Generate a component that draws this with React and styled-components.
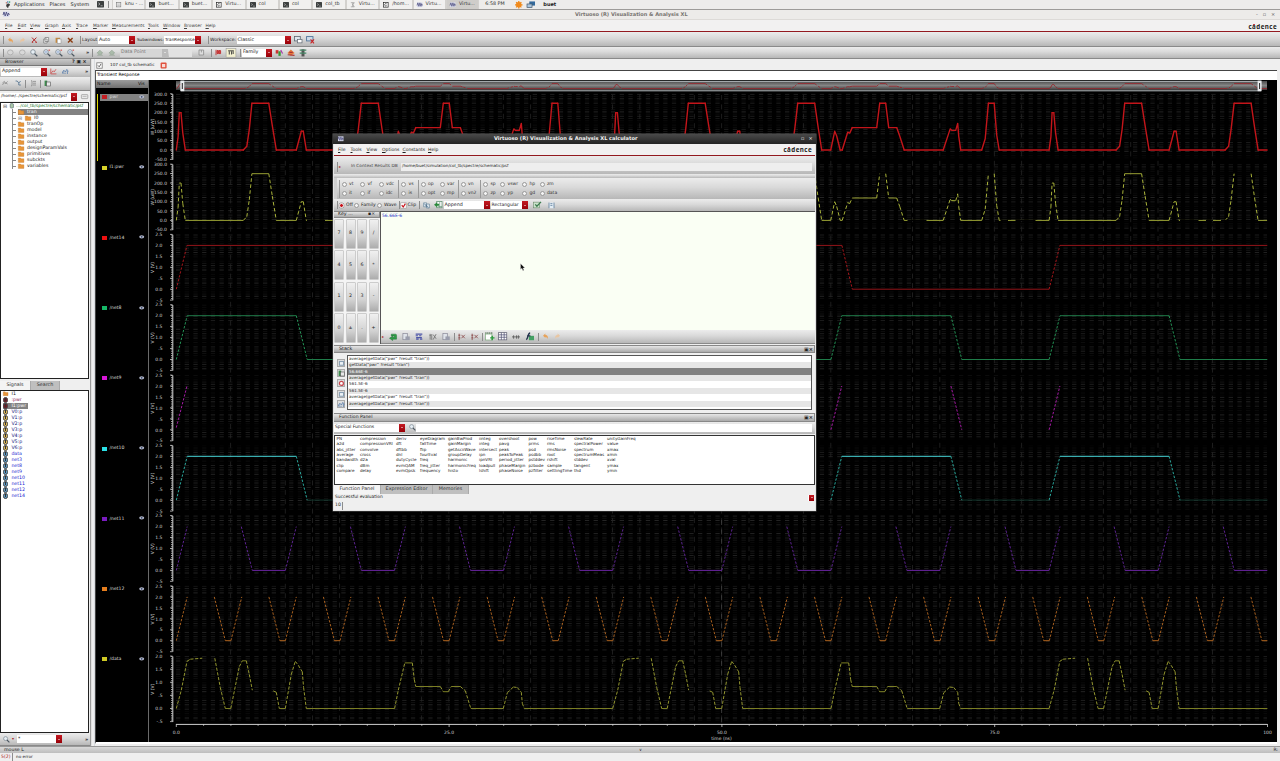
import React from "react";
import styled, { createGlobalStyle } from "styled-components";

const Global = createGlobalStyle`
  * { box-sizing: border-box; }
  html, body { margin: 0; padding: 0; background: #ededed; }
  body { width: 1280px; height: 761px; overflow: hidden; font-family: "DejaVu Sans", sans-serif; font-size: 5px; line-height: 1; color: #222; }
`;

const bar = "linear-gradient(#ececec, #d9d9d9 45%, #b7b7b7)";

const Screen = styled.div`
  width: 1280px; height: 761px; position: relative; overflow: hidden;
  display: flex; flex-direction: column; background: #efefef;
`;
const Row = styled.div`
  display: flex; align-items: center; flex: none; overflow: hidden;
  height: ${(p) => p.$h}px;
  padding: ${(p) => p.$pt || 0}px ${(p) => p.$pr || 0}px 0 ${(p) => p.$pl || 0}px;
`;
const GnomePanel = styled(Row)`background: #edeceb; border-bottom: 1px solid #9d9b99;`;
const TitleBar = styled(Row)`background: #edebe9; border-bottom: 1px solid #dddad7;`;
const MenuBar = styled(Row)`background: #f2f1f1; border-bottom: 1px solid #931a20;`;
const ToolBar = styled(Row)`background: ${bar}; border-bottom: ${(p) => (p.$line ? 1 : 0)}px solid #8a8a8a;`;
const Cell = styled.span`
  display: block; flex: none; white-space: nowrap; overflow: visible;
  width: ${(p) => (p.$w ? p.$w + "px" : "auto")};
  font-size: ${(p) => p.$s || 5}px; color: ${(p) => p.$c || "inherit"};
  font-weight: ${(p) => (p.$b ? 700 : 400)}; letter-spacing: ${(p) => p.$ls || 0}px;
  &::first-letter { text-decoration: ${(p) => (p.$u ? "underline" : "none")}; }
`;
const Gap = styled.span`flex: ${(p) => (p.$w ? "none" : 1)}; width: ${(p) => p.$w || 0}px;`;
const Sep = styled.span`flex: none; width: 1px; height: ${(p) => p.$h || 8}px; background: #8d8d8d; margin-right: ${(p) => p.$m || 0}px;`;
const TaskButton = styled.div`
  width: 33.4px; height: 9px; flex: none; display: flex; align-items: center; gap: 3px; padding-left: 3px;
  background: ${(p) => (p.$active ? "#cfcdca" : "#f1f0ef")}; border: 1px solid #d3d1ce; border-width: 0 1px; color: #333;
`;
const Field = styled.div`
  flex: none; width: ${(p) => p.$w}px; height: ${(p) => p.$h || 8}px; display: flex; align-items: center;
  background: ${(p) => p.$bg || "#fff"}; padding-left: 1px; overflow: hidden; white-space: nowrap; margin-right: ${(p) => p.$m || 0}px;
  font-size: ${(p) => p.$s || 4.8}px; color: ${(p) => p.$c || "inherit"};
`;
const Arrow = styled.i`
  margin-left: auto; flex: none; width: 6px; height: 100%; display: flex; align-items: center; justify-content: center;
  background: ${(p) => (p.$off ? "#bbb" : "linear-gradient(#c41a22, #980008)")};
  &::after { content: ""; border: 1px solid transparent; border-top: 1.5px solid #fff; border-bottom: 0; }
`;
const Combo = ({ w, h, m, s, off, children }) => (
  <Field $w={w} $h={h} $m={m} $s={s} $bg={off ? "#d6d6d6" : "#fff"} $c={off ? "#777" : undefined}>{children}<Arrow $off={off} /></Field>
);
const Logo = styled.span`
  font-family: "Open Sans", sans-serif; font-size: 6.2px; font-weight: 700; letter-spacing: 0.45px; color: #222; line-height: 7px; display: flex;
  i { font-style: normal; background: linear-gradient(#b3121d, #b3121d) 0.8px 0.9px / 2.4px 0.8px no-repeat; }
`;

const Svg = styled.svg`flex: none; display: block; margin-right: ${(p) => p.$m || 0}px; overflow: visible;`;
const shapes = {
  foot: <><path d="M1.5 5.8C.5 3.5 2 2.2 3.5 2.4 5.6 2.7 5 4.5 4 5c-1 .6-.2 1.8-1.2 1.9Z" fill="#3c3c3c" /><circle cx="1.3" cy="1.8" r=".6" fill="#a32" /><circle cx="2.8" cy="1" r=".7" fill="#26a" /><circle cx="4.6" cy="1.1" r=".8" fill="#3a7" /></>,
  term: <><rect width="7" height="6.4" rx=".6" fill="#3d4040" /><path d="M1.4 1.8l1.6 1.2-1.6 1.2M3.6 4.8h2" stroke="#ddd" strokeWidth=".6" fill="none" /></>,
  mail: <><rect x=".4" y=".7" width="5.2" height="5" fill="#eee" stroke="#777" strokeWidth=".7" /><path d="M1.5 2.4h3M1.5 4h3" stroke="#999" strokeWidth=".6" /></>,
  cds: <><rect x=".4" y=".4" width="5.6" height="5.6" fill="#fff" stroke="#222" strokeWidth=".8" /><path d="M4.3 2.2C3 1.2 2 2.2 2 3.3s1.2 1.8 2.3.9" stroke="#222" strokeWidth=".8" fill="none" /></>,
  wave: <><rect y=".4" width="6.4" height="5.6" fill="#d9dcec" /><path d="M0 4l1-3 1.2 4L3.4 1l1.2 4L5.4 2l1 2" stroke="#447" strokeWidth=".8" fill="none" /></>,
  sig: <path d="M1 .8h4L3.2 3.2 5 5.6H1M3.2 1v4.6" stroke="#888" strokeWidth=".7" fill="none" />,
  star: <><circle cx="3.3" cy="3.3" r="2.4" fill="#f08a1c" /><path d="M3.3 0v6.6M0 3.3h6.6M1 1l4.6 4.6M5.6 1L1 5.6" stroke="#f08a1c" strokeWidth="1.1" /></>,
  pcs: <><rect x="2" y=".4" width="5" height="3.6" fill="#346a9c" /><rect y="2.6" width="4.4" height="3.2" fill="#a9c6df" stroke="#456" strokeWidth=".6" /></>,
  undo: <path d="M1 2.8L3.4.6v1.3C5.7 2 6.4 3.7 5.5 6 5.1 4.5 4.6 4 3.4 3.9V5Z" fill="#e8a35a" />,
  redo: <path d="M6 2.8L3.6.6v1.3C1.4 2 .7 3.7 1.6 6c.4-1.5.8-2 2-2.1V5Z" fill="#e9c6a2" />,
  cut: <path d="M1 .6l4 4.2M5.4.6L1.2 5M.8 5.3h1.4M4.4 5.3h1.6" stroke="#b52a2a" strokeWidth="1" fill="none" />,
  copy: <path d="M2 .5h3.6v4H2ZM.7 2h3.4v4H.7Z" fill="#f5f5f5" stroke="#777" strokeWidth=".7" />,
  paste: <><rect x=".6" y=".8" width="4.4" height="5" fill="#c68a3c" /><rect x="2.2" y="2" width="3.8" height="4.2" fill="#fff" stroke="#888" strokeWidth=".5" /></>,
  del: <path d="M1 1l4.6 4.6M5.6 1L1 5.6" stroke="#8a3c12" strokeWidth="1.4" />,
  mag: <><circle cx="2.6" cy="2.6" r="2" fill="#e6eef4" stroke="#7a8791" strokeWidth=".7" /><path d="M4 4l2.4 2.4" stroke="#4b5660" strokeWidth="1.1" /></>,
  magRed: <><circle cx="2.6" cy="2.6" r="2" fill="#e6eef4" stroke="#7a8791" strokeWidth=".7" /><path d="M4 4l2.4 2.4" stroke="#4b5660" strokeWidth="1.1" /><path d="M4.8 1h1.4" stroke="#c33" strokeWidth=".8" /><path d="M1.6 2.6h2" stroke="#57b" strokeWidth=".6" /></>,
  globe: <ellipse cx="3.3" cy="3.4" rx="2.8" ry="2.5" fill="#d8d8d8" stroke="#a4a4a4" strokeWidth=".7" />,
  db: <path d="M1.4 1.4c0-1 3.8-1 3.8 0v3.8c0 1-3.8 1-3.8 0Z" fill="#a8c7a8" stroke="#456" strokeWidth=".6" />,
  arrowG: <path d="M3.4 1l2.6 2.6H4.8v1.2H2V3.6H.8ZM1 5.6h5" fill="#aabbaa" stroke="#93a393" strokeWidth=".5" />,
  win: <><rect x=".5" y=".5" width="5" height="3.8" fill="#dfe5ec" stroke="#5d6670" strokeWidth=".7" /><rect x="3" y="3" width="4" height="3" fill="#fff" stroke="#5d6670" strokeWidth=".6" /></>,
  winX: <><rect x=".5" y=".5" width="5.6" height="3.8" fill="#cfdbe9" stroke="#51759a" strokeWidth=".8" /><path d="M4 3l3 3.4M7 3L4 6.4" stroke="#c22" strokeWidth=".9" /></>,
  bars: <path d="M1 .8v5.4M1 1h4.6v5H1M3.4 1v2.4" stroke="#8d8d8d" strokeWidth=".8" fill="#ddd" />,
  flag: <path d="M1 .8v5.4M2 1.6h1.4v3H2zM4 1.6h1.6v3H4z" stroke="#b22" strokeWidth=".8" fill="#d55" />,
  tag: <><rect x="-.8" y="-.4" width="8.6" height="7.6" fill="#f3f0cf" stroke="#999" strokeWidth=".5" /><path d="M1 1.6h5M2 4.8V2M4 4.8V2M5.4 4.4V2" stroke="#333" strokeWidth=".8" /></>,
  chart: <path d="M.8.5v5.4h5.6M1.4 4.8l1.8-2 1 1L6 1.2" stroke="#c33" strokeWidth=".7" fill="none" />,
  multi: <path d="M.4 4.8l1.4-2.6L3.4 4l1.4-2.6 1.6 2M1 6V3.6M3 6V4.6M5.4 6V3" stroke="#547aa8" strokeWidth=".8" fill="none" />,
  gray: <path d="M.4 5l2-2.4 1 1.2L5.6 1.4M.4 3l2-1.6 1 1.4L5.6 4" stroke="#8a8a8a" strokeWidth=".8" fill="none" />,
  tree: <path d="M.6 1h1.6l1.6 2v2h2M5.6 1L3.8 3" stroke="#5b7893" strokeWidth=".9" fill="none" />,
  list: <path d="M1 .8h1v5H1M3 1.4h3M3 3.2h3M3 5h3" stroke="#888" strokeWidth=".8" fill="none" />,
  book2: <><rect x=".6" y=".6" width="2.6" height="5.4" fill="#3c8a4c" /><rect x="2.6" y="2" width="3.8" height="4" fill="#e8e8e8" stroke="#555" strokeWidth=".6" /></>,
  table: <><rect x=".4" y=".5" width="6.4" height="5.6" fill="#fff" stroke="#667" strokeWidth=".6" /><path d="M.4 2.2h6.4M.4 4.1h6.4M2.6.5v5.6M4.8.5v5.6" stroke="#557" strokeWidth=".6" /></>,
  gtable: <><rect x="2.4" y=".5" width="4.6" height="5.4" fill="#fff" stroke="#586" strokeWidth=".6" /><path d="M0 3.2L2.8 1v1.3h1.8v1.9H2.8v1.3Z" fill="#2b8a3c" /><path d="M5 .6v5.2M3.4 4.8H7" stroke="#586" strokeWidth=".5" /></>,
  gears: <><path d="M.6.8h3v4h-3zM3.4 2h3v4h-3z" fill="#dce7f0" stroke="#5c7c94" strokeWidth=".6" /><path d="M1.4 2l4 3.6" stroke="#357" strokeWidth=".7" /></>,
  green: <path d="M2 1h3.6q1 0 1 1v3.4H3.2V6.6L.4 4.6l2.8-2v1.2h1.4V2.6H2Z" fill="#2f9c48" stroke="#1c6f31" strokeWidth=".4" />,
  check: <><rect x=".6" y="1" width="5" height="5" fill="#cde3cd" stroke="#686" strokeWidth=".5" /><path d="M2 3l1.4 1.6L7 .8" stroke="#3a7b4c" strokeWidth="1.1" fill="none" /></>,
  book: <><rect x="1" y=".6" width="5" height="5.6" fill="#e2ecf4" /><path d="M1 .6v5.6M6 .6v5.6M2.4 1.6h2M2.4 3.4h2" stroke="#5d7f9c" strokeWidth=".8" /></>,
  doc: <><rect x=".8" y=".5" width="3.8" height="5.4" fill="#e0e4ea" stroke="#778" strokeWidth=".5" /><rect x="3" y="3" width="3.8" height="3.2" fill="#9a9dac" /></>,
  keys: <path d="M.6 1h5.8M.6 2.4h2M3.6 2.4h2M1 4h5M1 5.4h2.2M4.4 5.4h2" stroke="#4d56a8" strokeWidth="1" />,
  xy: <path d="M1 .8v5M.4 2h1.4M2.4 1v5M3.6 1.4l2.6 3.6M6.2 1L3.6 5.8" stroke="#777" strokeWidth=".8" />,
  xyr: <path d="M1 .6v5.6M.4 2h1.6M.4 4.2h1.6M3 1.6l3 3M6 1.6l-3 3" stroke="#844" strokeWidth=".7" />,
  plus: <><rect x=".4" y="1.6" width="5" height="4.6" fill="#fff" stroke="#7a7" strokeWidth=".5" /><path d="M.2.8h6" stroke="#353" strokeWidth=".9" strokeDasharray="1 .5" /><path d="M5.6 3v3.4M4 4.6h3.4" stroke="#2b9a3c" strokeWidth="1.1" /></>,
  step: <path d="M0 3.4h7M1.4 2v3M4 2v3M5.6 2v3" stroke="#555" strokeWidth=".7" />,
  fn: <><rect x="3" y="3" width="4" height="3.4" fill="#45a064" /><path d="M1 6C2.6 5 2 1 4 .8M1.6 3h2.6" stroke="#23324c" strokeWidth="1.1" fill="none" /></>,
  colors: <><rect x=".6" y="1" width="2.4" height="3" fill="#c33" /><rect x="3" y="2" width="2" height="4" fill="#393" /><path d="M5 1l1.6 3" stroke="#a3a" strokeWidth="1" /></>,
  orb: <><path d="M3.4.4L6.6 3.4 3.4 6 .4 3.4Z" fill="#e57a3d" /><path d="M.6 5l6 .6M2 3h3" stroke="#a33" strokeWidth="1" /></>,
  light: <><rect x="2.2" y=".3" width="2.6" height="6.2" fill="#555" /><path d="M.6 1h5.8M.6 3.6h5.8" stroke="#486" strokeWidth="1.1" /></>,
  folder: <path d="M.3 1h2.2l.6.8h2.8v3.6H.3Z" fill="#e8963a" stroke="#b76d1e" strokeWidth=".3" />,
  eye: <><ellipse cx="2.7" cy="2.8" rx="2.5" ry="1.6" fill="#b9bed2" /><circle cx="2.7" cy="2.8" r=".9" fill="#3a4a6a" /></>,
  save: <><rect x=".4" y="1.6" width="6.4" height="4" rx=".6" fill="#e9e9e9" stroke="#8a8a8a" strokeWidth=".6" /><path d="M1.6 3.4h4" stroke="#999" strokeWidth=".6" /></>,
  sheet: <rect x="1.4" y="1.6" width="4.2" height="3.6" fill="#eef2f6" stroke="#7b94ab" strokeWidth=".9" />,
  red: <circle cx="3.4" cy="3.4" r="2" fill="#fff" stroke="#c8484d" strokeWidth="1.2" />,
  box: <><rect x=".8" y=".8" width="5.4" height="5.4" fill="#fff" stroke="#777" strokeWidth=".8" /><path d="M2 3.4l1.2 1.4L5 2" stroke="#555" strokeWidth=".9" fill="none" /></>,
  boxRed: <><rect x=".8" y=".8" width="5.4" height="5.4" fill="#fff" stroke="#999" strokeWidth=".6" /><path d="M1.8 3.2l1.4 1.8L5.4 1.6" stroke="#c8141c" strokeWidth="1.2" fill="none" /></>,
  close: <><rect x=".6" y=".6" width="6" height="6" rx="1" fill="#e0503c" /><rect x="2" y="2" width="3.2" height="3.2" fill="#f7dcd6" /></>,
};
const Icon = ({ n, m, s = 7 }) => <Svg width={s} height={s} viewBox="0 0 7 7" $m={m}>{shapes[n]}</Svg>;

/* ---------- left browser ---------- */
const Body = styled.div`display: flex; height: 687px; flex: none;`;
const Side = styled.div`width: 91px; flex: none; display: flex; flex-direction: column; background: #efefef; border-right: 1px solid #9a9a9a;`;
const SideTitle = styled(Row)`background: linear-gradient(#c9c9c9, #a7a7a7); border-bottom: 1px solid #777;`;
const TreeBox = styled.div`
  height: ${(p) => p.$h}px; flex: none; background: #fff; border: 1px solid #222; margin: 0 1px 0 0;
  overflow: hidden; font-size: 4.7px;
`;
const TreeRow = styled.div`
  height: 6px; display: flex; align-items: center; padding-left: ${(p) => p.$in}px; white-space: nowrap; color: ${(p) => p.$c || "#222"};
`;
const Stub = styled.i`width: 4px; height: 6px; margin-left: 11px; margin-right: 2px; border-left: 1px solid #888; background: linear-gradient(#888, #888) 0 50% / 3px 1px no-repeat; flex: none;`;
const Picked = styled.div`
  display: flex; align-items: center; height: 6px; background: #828282; color: #fff; padding-right: 2px; flex: ${(p) => (p.$fill ? 1 : "none")};
`;
const TabStrip = styled.div`display: flex; height: 9px; flex: none; align-items: stretch;`;
const Tab = styled.div`
  width: ${(p) => p.$w}px; display: flex; align-items: center; justify-content: center; font-size: 4.8px; color: #333;
  background: ${(p) => (p.$on ? "#f4f4f4" : "#bfbfbf")}; border-right: 1px solid #aaa;
`;
const Orb = styled.i`width: 5.4px; height: 5.4px; border-radius: 50%; border: 0.8px solid #444; background: ${(p) => p.$c}; margin-right: 3px; flex: none;
  display: flex; align-items: center; justify-content: center; &::after { content: ""; width: 1.2px; height: 3px; background: #333; }`;
const signals = [
  ...["V0:p", "V1:p", "V2:p", "V3:p", "V4:p", "V5:p", "V6:p"].map((t) => [t, "#e2b955", "#14147a"]),
  ...["data", "net3", "net8", "net9", "net10", "net11", "net12", "net14"].map((t) => [t, "#5b9bc9", "#1b1bd0"]),
];

function Browser() {
  return (
    <Side>
      <SideTitle $h={7} $pl={5}><Cell $w={67} $s={4.6}>Browser</Cell><Cell $s={4.8} $b $ls={1.6}>?▣×</Cell></SideTitle>
      <ToolBar $h={11} $pl={1}><Combo w={46} m={3}>Append</Combo><Icon n="chart" m={5} /><Icon n="multi" /><Gap /><Cell $b $w={5}>»</Cell></ToolBar>
      <ToolBar $h={14} $pl={2} $line><Icon n="gray" m={6} /><Icon n="tree" m={3} /><Sep $m={4} /><Icon n="list" m={3} /><Sep $m={3} /><Icon n="book2" /></ToolBar>
      <Row $h={11}><Field $w={77} $h={8} $m={4} $s={4.25}>/home/../spectre/schematic/psf<Arrow /></Field><Icon n="save" /></Row>
      <TreeBox $h={277}>
        <TreeRow $in={2} $c="#15751f"><Cell $w={6} $c="#555">⊟</Cell><Icon n="db" s={6} m={1} /><Cell $s={4.3}>…/col_tb/spectre/schematic/psf</Cell></TreeRow>
        <TreeRow $in={0}><Stub /><Picked $fill><Icon n="folder" m={2} />tran</Picked></TreeRow>
        <TreeRow $in={0}><Stub /><Cell $w={7} $c="#777">⊟</Cell><Icon n="folder" m={2} />I0</TreeRow>
        {["tranOp", "model", "instance", "output", "designParamVals", "primitives", "subckts", "variables"].map((t) => (
          <TreeRow $in={0} key={t}><Stub /><Icon n="folder" m={2} />{t}</TreeRow>
        ))}
      </TreeBox>
      <Gap />
      <TabStrip><Tab $w={31} $on>Signals</Tab><Tab $w={29}>Search</Tab></TabStrip>
      <TreeBox $h={343}>
        <TreeRow $in={2}><Icon n="folder" m={2.5} s={6} />I1</TreeRow>
        <TreeRow $in={2} $c="#8b1a5a"><Orb $c="#7a1a22" />:pwr</TreeRow>
        <TreeRow $in={2}><Picked><Orb $c="#7a1a22" />I1:pwr</Picked></TreeRow>
        {signals.map(([t, c, k]) => <TreeRow $in={2} $c={k} key={t}><Orb $c={c} />{t}</TreeRow>)}
      </TreeBox>
      <ToolBar $h={13} $pl={3} $line><Icon n="mag" m={2} /><Cell $w={5} $c="#a22" $s={4}>▾</Cell><Combo w={45}>*</Combo><Gap /><Cell $b $w={5}>»</Cell></ToolBar>
    </Side>
  );
}

/* ---------- waveforms ---------- */
const X0 = 176.3, PX = 436.4, STRIP = 70.28, END = 1267.4;
const ZERO = [150, 220.4, 289.2, 359.5, 429.8, 500.1, 570.4, 640.7, 708.5];
const power = [[0,0],[1.8,70],[3,200],[4.7,200],[6.5,90],[9,0],[67,0],[70.5,20],[73,110],[75.6,250],[92.5,250],[96,130],[100,0],[120,0],[125,100],[127,100],[130,0],[176,0],[179.5,20],[182,110],[185,250],[202,250],[205.5,120],[209,0],[218,0],[222,100],[224,75],[227.5,0],[229.5,0],[235,95],[237,90],[239.5,120],[264,120],[267,250],[273,250],[276,120],[284,120],[287,75],[291.5,0],[330.5,0],[337.5,113],[339,106],[343,105],[345,142],[346,75],[348,0],[369,0],[372.5,60],[375.7,250],[381.5,250],[384,80],[386.5,0],[436.4,0]];
const outWave = [[0,0],[5,.7],[10.7,1.8],[14,1.88],[26,1.92],null,[38.5,1.92],[44,.8],[49,0],[54.5,0],[63,1.6],[66,1.82],[70,1.82],[73,1.3],[76,.7],null,[97,.67],[100,.62],[103,0],[109,0],[115,1.3],[119,1.8],[122,1.65],[126,1.4],[127.3,.8],[130,0],[218.3,0],[222,.7],[228.5,1.74],[236,1.74],[238,1.1],[239.5,.84],[264,.84],[267,.64],[272,.64],[275,.84],[284,.84],[289,.68],[294.5,0],[327,0],[331,.6],[337,.82],[341,.8],[345,.62],[346,.2],[348,0],[436.4,0]];
const cycles = (pattern, period) => {
  const pts = [];
  for (let k = 0; k * period < 1090; k++) {
    pattern.forEach((p) => pts.push(p && [X0 + k * period + p[0], p[1]]));
  }
  return pts;
};
const shift = (pattern) => pattern.map((p) => p && [X0 + p[0], p[1]]);
// Splits a trace in level runs and slopes, which are stroked differently.
function Trace({ pts, zero, unit, color, dim, width = 1, hideTop, hideLow, dash = "2.4 1.6", solid }) {
  let flat = "", slope = "";
  for (let i = 1; i < pts.length; i++) {
    const a = pts[i - 1], b = pts[i];
    if (!a || !b || a[0] > END - 0.5 || b[0] <= a[0]) continue;
    const x2 = Math.min(b[0], END);
    const v2 = a[1] + ((b[1] - a[1]) * (x2 - a[0])) / (b[0] - a[0]);
    const seg = `M${a[0].toFixed(1)} ${(zero - a[1] * unit).toFixed(1)}L${x2.toFixed(1)} ${(zero - v2 * unit).toFixed(1)}`;
    if (a[1] === b[1]) {
      if (hideTop && hideTop(a)) continue;
      if (hideLow && hideLow(a)) continue;
      flat += seg;
    } else slope += seg;
  }
  return (
    <g fill="none" strokeWidth={width} strokeLinecap={solid ? "round" : "butt"}>
      <path d={flat} stroke={color} />
      <path d={slope} stroke={dim || color} strokeDasharray={solid ? undefined : dash} />
    </g>
  );
}
const slow = [[0,0],[10.7,2],[665.6,2],[676,0],[872.8,0],[883.6,2],[1091,2]];
const square = [[0,0],[10.9,2],[120,2],[130.9,0],[218.2,0]];
const edges = [[0,.1],[10.7,2],null,[654.6,0],[665.5,2],null,[774.6,2],[785.5,0],null,[872.8,0],[883.6,2]];

const verticals = [230.6,285.3,312.5,339.6,421.5,448.8,503.4,530.6,612.5,639.8,694.4,721.6,749,803.5,830.8,912.5,939.8,994.4,1021.6,1103.4,1130.7,1158,1212.5];
function Chart() {
  const grid = [], ticks = [], labels = [];
  for (let k = 0; k < 9; k++) {
    const top = 94.4 + k * STRIP;
    for (let j = 0; j < 30; j++) {
      const y = top + j * 2.19;
      const o = [0.9, 0.55, 0.8, 0.35, 1, 0.45][(j * 5 + k) % 6] * (Math.sin(j * 0.85 + k) > -0.35 ? 1 : 0.35);
      grid.push(<path key={`${k}-${j}`} d={`M176 ${y.toFixed(1)}H1267`} stroke="#2d2d2d" strokeOpacity={o} strokeWidth=".8" strokeDasharray="4.3 4.4" />);
      ticks.push(`M171 ${y.toFixed(1)}H172.5`);
    }
    const names = k < 2 ? ["300.0", "250.0", "200.0", "150.0", "100.0", "50.0", "0.0", "-50.0"] : k === 8 ? ["2.0", "1.5", "1.0", ".5", "0.0", "-.5"] : ["2.5", "2.0", "1.5", "1.0", ".5", "0.0", "-.5"];
    const step = k < 2 ? 9.36 : k === 8 ? 13.1 : 10.95;
    const y0 = k < 2 ? ZERO[k] - 6 * step : k === 8 ? ZERO[k] - 4 * step : ZERO[k] - 5 * step;
    names.forEach((t, i) => {
      const y = y0 + i * step;
      labels.push(<text key={k + t} x={k < 2 ? 167 : 162.5} y={y + 1.7} textAnchor="end">{t}</text>);
      ticks.push(`M170 ${y.toFixed(1)}H172.5`);
    });
    labels.push(<text key={"u" + k} transform={`translate(153.6 ${127 + k * STRIP}) rotate(-90)`} textAnchor="middle">{k < 2 ? "W (uW)" : "V (V)"}</text>);
  }
  const mini = cycles(power, PX);
  const quiet = (a) => { const o = (a[0] - X0) % PX; return a[1] === 250 && o > 180 && o < 390; };
  return (
    <svg width="1128" height="661" viewBox="149 80 1128 661">
      <rect x="149" y="80" width="1128" height="661" fill="#000" />
      <defs>
        <linearGradient id="slide" x1="0" y1="0" x2="0" y2="1"><stop offset="0" stopColor="#4a4a4a" /><stop offset=".5" stopColor="#858585" /><stop offset="1" stopColor="#3c3c3c" /></linearGradient>
      </defs>
      {grid}
      <path d={verticals.map((x) => `M${x} 95V724`).join("")} stroke="#242424" strokeWidth=".8" strokeDasharray="5 4.4" />
      <path d="M721.6 520V724" stroke="#444" strokeWidth=".8" strokeDasharray="5 4.4" />

      <rect x="176" y="81" width="1091" height="9" fill="url(#slide)" />
      <path d="M181 81.3H1261M181 90.8H1261" stroke="#b9c0c4" strokeWidth="1" />
      <Trace pts={mini} zero={88.6} unit={0.02} color="#9c2026" dim="#9c2026" width={0.8} />
      {[182.3, 1259.6].map((x) => <g key={x}><rect x={x - 2} y="80.6" width="4" height="10.6" fill="#e9ecee" /><path d={`M${x} 83v6`} stroke="#222" /></g>)}

      <path d={ticks.join("")} stroke="#c9c9c9" strokeWidth=".8" />
      {ZERO.map((z, k) => <path key={z} d={`M172.8 ${94.2 + k * STRIP}v65.6`} stroke="#d6d6d6" strokeWidth="1" />)}
      <path d="M176 724.4H1267.4" stroke="#cfcfcf" strokeWidth="1" />
      <path d={Array.from({ length: 41 }, (_, i) => `M${(X0 + i * 27.28).toFixed(1)} 724v${i % 10 ? 1.8 : 3}`).join("")} stroke="#cfcfcf" strokeWidth=".8" />
      <g fontSize="4.5" fill="#d4d4d4">
        {labels}
        {["0.0", "25.0", "50.0", "75.0", "100"].map((t, i) => <text key={t} x={X0 + i * 272.8} y="734" textAnchor="middle">{t}</text>)}
        <text x="721.5" y="740" textAnchor="middle">time (ns)</text>
      </g>

      <Trace pts={mini} zero={ZERO[0]} unit={0.187} color="#c3151a" width={1.4} solid />
      <Trace pts={cycles(power, PX)} zero={ZERO[1]} unit={0.187} color="#9aa134" dim="#a9b33a" hideTop={quiet} dash="3.6 2.4" />
      <path d="M307 220.4h18M907.5 220.4h19M1000.5 220.4h7.5M1015.5 220.4h20M1180 220.4h18.5M1206 220.4h7M1221 220.4h7" stroke="#000" strokeWidth="1.4" />
      <Trace pts={shift(slow)} zero={ZERO[2]} unit={21.9} color="#94151a" dim="#a5161b" />
      <Trace pts={cycles(square, 218.2)} zero={ZERO[3]} unit={21.9} color="#1f7c49" dim="#239255" />
      <Trace pts={shift(edges)} zero={ZERO[4]} unit={21.9} color="none" dim="#a41aa4" />
      <Trace pts={cycles(square, 218.2)} zero={ZERO[5]} unit={21.9} color="#46d5d8" dim="#2aa79c" hideLow={(a) => a[1] === 0} />
      <path d="M307 500.1h87M961 500.1h88M1179.5 500.1h88" stroke="#123a30" strokeWidth=".9" />
      <Trace pts={cycles([[0,0],[10.9,2],null,[65,2],[76,0],[109.1,0]], 109.1)} zero={ZERO[6]} unit={21.9} color="#6a24a2" dim="#5c2390" />
      <Trace pts={cycles([[0,0],[10.9,2],null,[38,2],[49,0],[54.56,0]], 54.56)} zero={ZERO[7]} unit={21.9} color="#b0641e" dim="#a8601f" />
      <Trace pts={cycles(outWave, PX)} zero={ZERO[8]} unit={26.2} color="#7b7e24" dim="#93962f" dash="3.2 1.6" />
    </svg>
  );
}

const Splitter = styled.div`width: 4px; flex: none; background: linear-gradient(90deg, #d8d8d8, #f7f7f7, #cfd3d8);`;
const Plot = styled.div`flex: 1; display: flex; flex-direction: column;`;
const Caption = styled(Row)`background: #fff; border-top: 1px solid #444; border-left: 1px solid #555; margin-right: 3px;`;
const Graph = styled.div`
  display: flex; height: 664px; margin-right: 3px; border-left: 1px solid #444; background: #000; border-bottom: 2px solid #fff; flex: none;
`;
const Names = styled.div`width: 53px; flex: none; border-right: 1px solid #6a6a6a; color: #ddd; font-size: 4.6px;`;
const NamesHead = styled.div`display: flex; height: 8px; align-items: center; padding-left: 1px; background: linear-gradient(#9d9d9d, #6f6f6f); color: #111; margin-bottom: 5.8px;`;
const Strip = styled.div`height: 70.28px; padding-left: 1px; display: flex; align-items: flex-start;`;
const Marker = styled.i`flex: none; width: 1.4px; height: 67px; background: #e0d800; margin-right: -1.4px;`;
const NameRow = styled.div`display: flex; height: 7px; flex: 1; min-width: 0; margin-left: 3px; align-items: center; background: ${(p) => (p.$on ? "#828282" : "none")}; padding-left: 2px;`;
const Swatch = styled.i`flex: none; width: 5px; height: 4px; background: ${(p) => p.$c}; margin-right: 2.5px;`;
const signalNames = [["pwr", "#c21d22"], ["I1:pwr", "#d8d32a"], ["/net14", "#ee1010"], ["/net8", "#16b767"], ["/net9", "#d817d8"], ["/net10", "#2be0e6"], ["/net11", "#7a1cc0"], ["/net12", "#e67e1e"], ["/data", "#cfc924"]];

/* ---------- calculator window ---------- */
const Dialog = styled.div`
  position: absolute; left: 333px; top: 134px; width: 483px; height: 377px; display: flex; flex-direction: column;
  background: #efefef; border: 1px solid #e4e4e4; border-top: 0; box-shadow: 0 0 0 0.5px #555;
`;
const DarkTitle = styled(Row)`background: linear-gradient(#4a4a4a, #242424); margin: 0 -1px; color: #f3f3f3;`;
const Radio = styled.i`
  width: 5px; height: 5px; border-radius: 50%; flex: none; margin-right: ${(p) => p.$m ?? 2.5}px; background: ${(p) => (p.$on ? "#c8141c" : "#f4f4f4")};
  border: ${(p) => (p.$on ? "1.4px solid #f4f4f4" : "0.7px solid #999")}; box-shadow: 0 0 0 ${(p) => (p.$on ? 0.4 : 0)}px #999;
`;
const Radios = styled.div`
  height: 21px; flex: none; display: grid; grid-template-columns: 18.5px 18.5px 22.5px 19.5px 19px 21px 22.5px 17px 22px 17.5px 30px;
  grid-template-rows: 9px 9px; padding: 2px 0 0 4.5px; background: ${bar}; border-left: 3px solid #cfcfcf; align-items: center;
`;
const RadioCell = styled.div`display: flex; align-items: center; height: 9px; font-size: 4.5px; color: #333;
  border-left: 1px solid ${(p) => (p.$bar ? "#999" : "transparent")}; margin-left: -3px; padding-left: 2px;`;
const Middle = styled.div`display: flex; height: 133px; flex: none;`;
const KeyPad = styled.div`width: 46px; flex: none; display: flex; flex-direction: column; background: #f4f4f4;`;
const Keys = styled.div`flex: 1; display: grid; grid-template-columns: repeat(4, 10px); grid-template-rows: repeat(4, 30px); gap: 1.5px; padding-top: 0.5px;`;
const Key = styled.div`background: linear-gradient(#f0f0f0, #d2d2d2 60%, #acacac); border: 0.5px solid #ccc; border-radius: 1px; display: flex; align-items: center; justify-content: center; font-size: 4.7px;`;
const Editor = styled.div`flex: 1; display: flex; flex-direction: column; border-left: 1px solid #555;`;
const Buffer = styled.div`height: 119px; background: #fafff4; border-top: 1px solid #555; padding: 2px 0 0 1px; color: #2430c8; font-size: 4.5px; position: relative;`;
const Cursor = styled.svg`position: absolute; left: 139px; top: 51px;`;
const PanelTitle = styled(Row)`background: linear-gradient(#e6e6e6, #a9a9a9); border: 1px solid #888; border-width: 1px 1px 1px 0; font-size: 4.8px; margin-top: ${(p) => p.$mt || 0}px;`;
const StackBox = styled.div`display: flex; height: 60px; flex: none; padding: 1.5px 3px 3.5px 3px;`;
const StackIcons = styled.div`width: 10px; display: flex; flex-direction: column; justify-content: space-around; padding: 3px 0 0;`;
const IconButton = styled.span`width: 8px; height: 8px; background: #dedede; border: 0.5px solid #aaa; display: flex;`;
const StackList = styled.div`flex: 1; border: 1px solid #555; background: #fff; overflow: hidden;`;
const StackRow = styled.div`
  height: 6.45px; display: flex; align-items: center; padding-left: 1px; font-size: 4.15px; white-space: pre;
  background: ${(p) => (p.$on ? "#808080" : p.$odd ? "#e6e6e6" : "#fff")}; color: ${(p) => (p.$on ? "#fff" : "#222")};
`;
const Functions = styled.div`
  height: 50px; flex: none; margin-top: 1px; background: #fff; border: 1px solid #333; display: grid; padding: 1px 0 0 1.5px; align-content: start;
  grid-template-columns: 23.5px 36px 24px 28px 31px 20px 29.5px 18.5px 27px 33px 40px; grid-template-rows: repeat(7, 5.3px);
  grid-auto-flow: column; font-size: 4.1px; color: #222; white-space: nowrap; align-items: center;
`;
const functionNames = "PN a2d abs_jitter average bandwidth clip compare compression compressionVRI convolve cross d2a dBm delay deriv dft dftbb dnl dutyCycle evmQAM evmQpsk eyeDiagram fallTime flip fourEval freq freq_jitter frequency gainBwProd gainMargin getAsciiWave groupDelay harmonic harmonicFreq histo iinteg integ intersect ipn ipnVRI loadpull lshift overshoot pavg peak peakToPeak period_jitter phaseMargin phaseNoise pow prms psd psdbb pstddev pzbode pzfilter riseTime rms rmsNoise root rshift sample settlingTime slewRate spectralPower spectrum spectrumMeas stddev tangent thd unityGainFreq value xmax xmin xval ymax ymin".split(" ");
const avg = 'average(getData("pwr" ?result "tran"))';
const stack = [avg, 'getData("pwr" ?result "tran")', "56.66E-6", avg, "561.5E-6", "561.5E-6", avg, avg];

function Calculator() {
  return (
    <Dialog>
      <DarkTitle $h={9.5} $pl={5}><Icon n="wave" s={6} /><Gap $w={150} /><Cell $b $s={5.07} $w={307}>Virtuoso (R) Visualization &amp; Analysis XL calculator</Cell><Cell $s={5} $ls={4}>▫×</Cell></DarkTitle>
      <MenuBar $h={12.5} $pl={4} $pr={3} $pt={1}>
        {[["File", 12.5], ["Tools", 16], ["View", 15.5], ["Options", 20.5], ["Constants", 25.5], ["Help", 20]].map(([t, w]) => <Cell $w={w} $u key={t} $s={4.5}>{t}</Cell>)}
        <Gap /><Logo>c<i>a</i>dence</Logo>
      </MenuBar>
      <ToolBar $h={18} $pl={3} $pt={3}><Sep $h={10} $m={1} /><Cell $w={12} $c="#a22" $s={4}>▸</Cell><Cell $w={50} $s={4.3} $c="#444">In Context Results DB</Cell><Field $w={411} $h={8} $bg="#eee" $s={4.1}>/home/buet/simulation/col_tb/spectre/schematic/psf</Field></ToolBar>
      <ToolBar $h={4} />
      <Radios>
        {["vt", "vf", "vdc", "vs", "op", "var", "vn", "sp", "vswr", "hp", "zm", "it", "if", "idc", "is", "opt", "mp", "vn2", "zp", "yp", "gd", "data"].map((t, i) => (
          <RadioCell key={t} $bar={[0, 3, 4, 6, 7].includes(i % 11)}><Radio />{t}</RadioCell>
        ))}
      </Radios>
      <ToolBar $h={12} $pl={3}>
        <Sep $m={1} /><Radio $on $m={2} /><Cell $w={8} $s={4.6}>Off</Cell><Radio $m={2} /><Cell $w={16} $s={4.6}>Family</Cell><Radio $m={2} /><Cell $w={14.5} $s={4.6}>Wave</Cell><Sep />
        <Icon n="boxRed" m={1} /><Cell $w={11} $s={4.6}>Clip</Cell><Sep $m={3} /><Icon n="gears" m={4} /><Icon n="gtable" m={2} s={8} /><Combo w={46} m={1}>Append</Combo><Combo w={37} m={5} s={4.5}>Rectangular</Combo><Icon n="check" s={8} m={7} /><Icon n="book" />
      </ToolBar>
      <Middle>
        <KeyPad>
          <PanelTitle $h={7} $pl={4}><Cell $w={30} $s={4.8}>Key ...</Cell><Cell $s={4.6}>▪×</Cell></PanelTitle>
          <Keys>{[..."789/456*123-0±.+"].map((k) => <Key key={k}>{k}</Key>)}</Keys>
        </KeyPad>
        <Editor>
          <Buffer>56.66E-6
            <Cursor width="6" height="9" viewBox="0 0 6 9"><path d="M.5.5v6l1.4-1.2 1 2.5 1.1-.5-1-2.3h2Z" fill="#111" stroke="#fff" strokeWidth=".3" /></Cursor>
          </Buffer>
          <ToolBar $h={14} $pl={1} $line>
            <Cell $w={7} $c="#a22" $s={4}>▸</Cell><Icon n="green" s={8} m={5} /><Icon n="doc" s={8} m={5} /><Icon n="keys" s={8} m={6} /><Icon n="xy" s={8} m={5} /><Icon n="doc" s={8} m={4} /><Sep $m={3} />
            <Icon n="xyr" s={8} m={5} /><Icon n="xyr" s={8} m={3} /><Sep $m={2} /><Icon n="plus" s={9} m={4} /><Icon n="table" s={9} m={5} /><Icon n="step" s={8} m={5} /><Icon n="fn" s={9} m={4} /><Sep $m={3} /><Icon n="undo" m={5} /><Icon n="redo" />
          </ToolBar>
        </Editor>
      </Middle>
      <PanelTitle $h={8} $pl={5} $pr={1} $mt={1}><Cell $s={4.8}>Stack</Cell><Gap /><Cell $b>▣×</Cell></PanelTitle>
      <StackBox>
        <StackIcons>{["sheet", "book2", "red", "sheet", "multi"].map((n, i) => <IconButton key={i}><Icon n={n} /></IconButton>)}</StackIcons>
        <StackList>{stack.map((t, i) => <StackRow key={i} $on={i === 2} $odd={i % 2}>{t}</StackRow>)}</StackList>
      </StackBox>
      <PanelTitle $h={8.5} $pl={5} $pr={1}><Cell $s={4.6}>Function Panel</Cell><Gap /><Cell $b>▣×</Cell></PanelTitle>
      <ToolBar $h={12}><Combo w={71} m={4} s={4.5}>Special Functions</Combo><Icon n="mag" /><Field $w={396} $h={8} /></ToolBar>
      <Functions>{functionNames.map((f) => <span key={f}>{f}</span>)}</Functions>
      <TabStrip><Tab $w={47} $on>Function Panel</Tab><Tab $w={52}>Expression Editor</Tab><Tab $w={36}>Memories</Tab></TabStrip>
      <Row $h={8} $pl={1} $pr={1}><Cell $s={4.4}>Successful evaluation</Cell><Gap /><Field $w={6} $h={6}><Arrow /></Field></Row>
      <Row $h={8} $pl={1}><Cell $w={7} $s={4.6}>10</Cell><Sep /></Row>
    </Dialog>
  );
}

const tasks = [["mail", "knu - ..."], ["term", "buet..."], ["term", "buet..."], ["cds", "Virtu..."], ["term", "col"], ["term", "col"], ["term", "col_tb"], ["sig", "Virtu..."], ["cds", "/hom..."], ["wave", "Virtu..."], ["wave", "Virtu..."]];
const menus = [["File", 12.7], ["Edit", 12.3], ["View", 15], ["Graph", 17], ["Axis", 14], ["Trace", 17], ["Marker", 19], ["Measurements", 36], ["Tools", 15], ["Window", 21], ["Browser", 21.5], ["Help", 15]];
const Status = styled(Row)`background: linear-gradient(#d9d9d9, #bdbdbd); border-top: 1px solid #999;`;

export default function App() {
  return (
    <Screen>
      <Global />
      <GnomePanel $h={10} $pl={5}>
        <Icon n="foot" m={2} /><Cell $w={35.5}>Applications</Cell><Cell $w={21}>Places</Cell><Cell $w={26.5}>System</Cell><Icon n="term" m={4} /><Sep $m={3} $h={7} />
        {tasks.map(([n, t], i) => <TaskButton key={i} $active={i === 10}><Icon n={n} s={6} /><Cell $s={4.8}>{t}</Cell></TaskButton>)}
        <Gap $w={6} /><Cell $w={30} $s={4.8}>6:58 PM</Cell><Icon n="star" m={4} s={8} /><Icon n="pcs" m={8} s={8} /><Cell $b>buet</Cell>
      </GnomePanel>
      <TitleBar $h={10} $pl={3}><Icon n="wave" /><Gap $w={565} /><Cell $b $s={5.04} $c="#77736f">Virtuoso (R) Visualization &amp; Analysis XL</Cell><Gap /><Cell $w={24} $c="#555" $ls={4.9}>-▫×</Cell></TitleBar>
      <MenuBar $h={12} $pl={5} $pr={3} $pt={1.5}>{menus.map(([t, w]) => <Cell $w={w} $u key={t} $s={4.4} $c="#444">{t}</Cell>)}<Gap /><Logo>c<i>a</i>dence</Logo></MenuBar>
      <ToolBar $h={15} $pl={3} $pt={2} $line>
        <Sep $m={3} /><Icon n="undo" m={5} /><Icon n="redo" m={5} /><Icon n="cut" m={5} /><Icon n="copy" m={5} /><Icon n="paste" m={5} /><Icon n="del" m={6} /><Sep $m={1} />
        <Cell $w={16} $s={4.5}>Layout</Cell><Combo w={37} m={2}>Auto</Combo><Cell $w={27} $s={4.1}>Subwindows:</Cell><Combo w={37} m={7} s={4.3}>TranResponse</Combo><Sep $m={1} /><Cell $w={26.5} $s={4.5}>Workspace:</Cell><Combo w={54} m={3}>Classic</Combo><Icon n="win" m={4} s={8} /><Icon n="winX" s={8} />
      </ToolBar>
      <ToolBar $h={12} $pl={3} $line>
        <Sep $m={3} /><Icon n="globe" m={5} /><Icon n="globe" m={4} /><Icon n="mag" m={5} s={8} /><Icon n="magRed" m={4} s={8} /><Icon n="magRed" m={4} s={8} /><Icon n="magRed" m={11} s={8} /><Cell $w={6} $b>»</Cell><Sep $m={3} />
        <Icon n="arrowG" m={4} s={8} /><Icon n="arrowG" m={4} s={8} /><Combo w={48} m={1} off>Data Point</Combo><Field $w={23} $m={6} $bg="#e2e2e2" /><Icon n="bars" m={6} /><Sep $m={3} /><Icon n="flag" m={5} /><Icon n="tag" m={5} s={8} /><Sep $m={1} />
        <Combo w={30} m={3}>Family</Combo><Icon n="colors" m={4} s={8} /><Icon n="orb" m={4} s={8} /><Icon n="light" s={8} />
      </ToolBar>
      <Body>
        <Browser />
        <Splitter />
        <Plot>
          <Row $h={11} $pl={1} $pt={1}><Icon n="box" /><Gap $w={7} /><Cell $w={50} $s={4.2}>107 col_tb schematic</Cell><Icon n="close" /></Row>
          <Caption $h={10} $pl={1}><Cell $s={4.4} $c="#000">Transient Response</Cell></Caption>
          <Graph>
            <Names>
              <NamesHead><Cell $w={41} $s={4.6}>Name</Cell><Cell $s={4.6}>Vis</Cell></NamesHead>
              {signalNames.map(([t, c], i) => (
                <Strip key={t}>{i === 0 && <Marker />}<NameRow $on={i === 0}><Swatch $c={c} /><Cell $w={29} $s={4.6}>{t}</Cell><Icon n="eye" /></NameRow></Strip>
              ))}
            </Names>
            <Chart />
          </Graph>
        </Plot>
      </Body>
      <Status $h={7} $pl={4} $pr={2}><Cell $w={635} $s={4.7}>mouse L</Cell><Cell $s={4}>∨</Cell><Gap /><Cell $s={4.6}>R:</Cell></Status>
      <Row $h={8} $pl={1}><Cell $w={11} $s={4.6} $c="#a22">5(2)</Cell><Sep $m={3} /><Cell $s={4.2}>no error</Cell></Row>
      <Calculator />
    </Screen>
  );
}
